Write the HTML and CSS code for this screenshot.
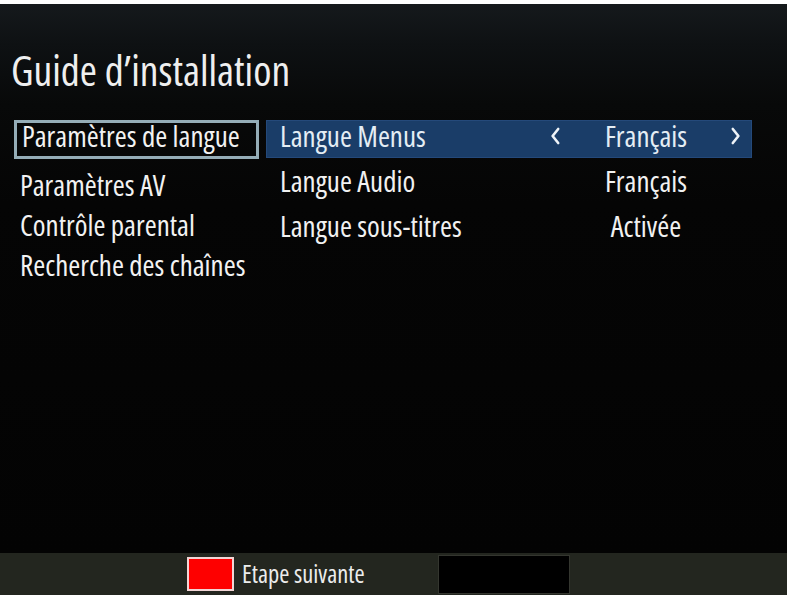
FILE: index.html
```html
<!DOCTYPE html>
<html lang="fr">
<head>
<meta charset="utf-8">
<title>Guide d’installation</title>
<link rel="stylesheet" href="styles.css">
</head>
<body>
<div class="topstrip"></div>
<main class="screen">
  <h1 class="title">Guide d’installation</h1>
  <div class="panes">
    <ul class="menu">
      <li class="menu-item sel">Paramètres de langue</li>
      <li class="menu-item">Paramètres AV</li>
      <li class="menu-item">Contrôle parental</li>
      <li class="menu-item">Recherche des chaînes</li>
    </ul>
    <div class="settings">
      <div class="row active">
        <span class="label">Langue Menus</span>
        <span class="arrow arrow-left"><svg width="11" height="18" viewBox="0 0 11 18"><polyline points="8.2,2 2.6,9 8.2,16" fill="none" stroke="#eef3f8" stroke-width="2.6" stroke-linejoin="round" stroke-linecap="round"/></svg></span>
        <span class="value">Français</span>
        <span class="arrow"><svg width="11" height="18" viewBox="0 0 11 18"><polyline points="2.8,2 8.4,9 2.8,16" fill="none" stroke="#eef3f8" stroke-width="2.6" stroke-linejoin="round" stroke-linecap="round"/></svg></span>
      </div>
      <div class="row">
        <span class="label">Langue Audio</span>
        <span class="arrow"></span>
        <span class="value">Français</span>
        <span class="arrow"></span>
      </div>
      <div class="row">
        <span class="label">Langue sous-titres</span>
        <span class="arrow"></span>
        <span class="value">Activée</span>
        <span class="arrow"></span>
      </div>
    </div>
  </div>
</main>
<footer class="footer">
  <span class="key-red"></span>
  <span class="key-label">Etape suivante</span>
  <span class="key-black"></span>
</footer>
</body>
</html>
```
FILE: styles.css
```css
html, body {
  margin: 0;
  padding: 0;
}
body {
  width: 787px;
  height: 595px;
  overflow: hidden;
  background: #030303;
  font-family: "Open Sans", "Noto Sans", sans-serif;
  font-stretch: condensed;
  color: #f1f1f1;
}
.topstrip {
  height: 4px;
  background: #ffffff;
}
.screen {
  height: 549px;
  display: flex;
  flex-direction: column;
  background: linear-gradient(180deg, #15191c 0px, #0e1113 40px, #080909 100px, #050505 200px, #030303 549px);
}
.title {
  margin: 42px 0 0 0;
  padding-left: 11px;
  font-size: 41.5px;
  line-height: 48px;
  font-weight: 400;
  color: #efefef;
}
.panes {
  margin-top: 26px;
  display: flex;
  align-items: flex-start;
}
.menu {
  list-style: none;
  margin: 0 0 0 14px;
  padding: 0;
  width: 245px;
  display: flex;
  flex-direction: column;
}
.menu-item {
  font-size: 29px;
  line-height: 32px;
  padding-left: 6px;
  margin-top: 8px;
  white-space: nowrap;
  color: #f2f2f2;
}
.menu-item.sel {
  margin-top: 0;
  margin-bottom: 2px;
  border: 3px solid #95adb7;
  padding: 0 0 7px 5px;
  line-height: 26px;
}
.settings {
  margin-left: 7px;
  width: 486px;
  display: flex;
  flex-direction: column;
  gap: 7px;
}
.row {
  display: grid;
  grid-template-columns: 1fr 24px 154px 24px;
  align-items: center;
  padding: 0 5px 6px 14px;
  height: 38px;
  box-sizing: border-box;
  font-size: 29px;
  line-height: 32px;
  white-space: nowrap;
}
.row.active {
  background: #1a3d68;
  box-shadow: inset 0 0 0 1px #24497a;
  color: #e4edf4;
}
.label {
  justify-self: start;
}
.arrow {
  display: flex;
  justify-content: center;
  align-items: center;
  height: 32px;
}
.arrow-left {
  padding-right: 4px;
}
.value {
  text-align: center;
}
.footer {
  height: 42px;
  background: #23261f;
  display: flex;
  align-items: center;
  padding-left: 187px;
}
.key-red {
  width: 43px;
  height: 30px;
  background: #fe0000;
  border: 2px solid #f2d5d5;
}
.key-label {
  width: 204px;
  padding-left: 8px;
  box-sizing: border-box;
  font-size: 24.5px;
  line-height: 30px;
  color: #ececec;
  white-space: nowrap;
}
.key-black {
  width: 130px;
  height: 37px;
  background: #000000;
  border: 1px solid #34362f;
}
```
